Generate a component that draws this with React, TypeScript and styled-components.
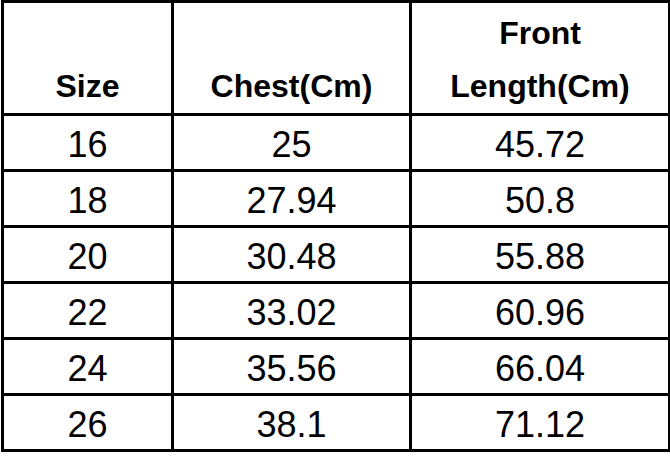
import React from "react";
import styled, { createGlobalStyle } from "styled-components";

const GlobalStyle = createGlobalStyle`
  html, body {
    margin: 0;
    padding: 0;
    background: #ffffff;
  }
  body {
    font-family: "Liberation Sans", Arial, sans-serif;
    color: #000000;
  }
`;

const Page = styled.div`
  width: 670px;
  height: 459px;
  overflow: hidden;
  background: #ffffff;
`;

const SizeTable = styled.table`
  margin-left: 1px;
  width: 670px;
  table-layout: fixed;
  border-collapse: separate;
  border-spacing: 3px;
  background: #000000;
`;

const HeaderRow = styled.tr`
  height: 110px;
`;

const DataRow = styled.tr`
  height: 53px;
`;

const HeadCell = styled.th`
  padding: 0;
  background: #ffffff;
  vertical-align: bottom;
  text-align: center;
  font-family: "Liberation Sans", Arial, sans-serif;
  font-weight: 700;
  font-size: 32px;
  line-height: 53px;
  color: #000000;
`;

const Cell = styled.td`
  padding: 4px 0 0 0;
  background: #ffffff;
  vertical-align: middle;
  text-align: center;
  font-family: "Liberation Sans", Arial, sans-serif;
  font-weight: 400;
  font-size: 36px;
  line-height: 49px;
  color: #000000;
`;

const rows: [string, string, string][] = [
  ["16", "25", "45.72"],
  ["18", "27.94", "50.8"],
  ["20", "30.48", "55.88"],
  ["22", "33.02", "60.96"],
  ["24", "35.56", "66.04"],
  ["26", "38.1", "71.12"],
];

export default function App() {
  return (
    <Page>
      <GlobalStyle />
      <SizeTable>
        <colgroup>
          <col style={{ width: 167 }} />
          <col style={{ width: 235 }} />
          <col style={{ width: 256 }} />
        </colgroup>
        <thead>
          <HeaderRow>
            <HeadCell>Size</HeadCell>
            <HeadCell>Chest(Cm)</HeadCell>
            <HeadCell>
              Front
              <br />
              Length(Cm)
            </HeadCell>
          </HeaderRow>
        </thead>
        <tbody>
          {rows.map((r) => (
            <DataRow key={r[0]}>
              <Cell>{r[0]}</Cell>
              <Cell>{r[1]}</Cell>
              <Cell>{r[2]}</Cell>
            </DataRow>
          ))}
        </tbody>
      </SizeTable>
    </Page>
  );
}
